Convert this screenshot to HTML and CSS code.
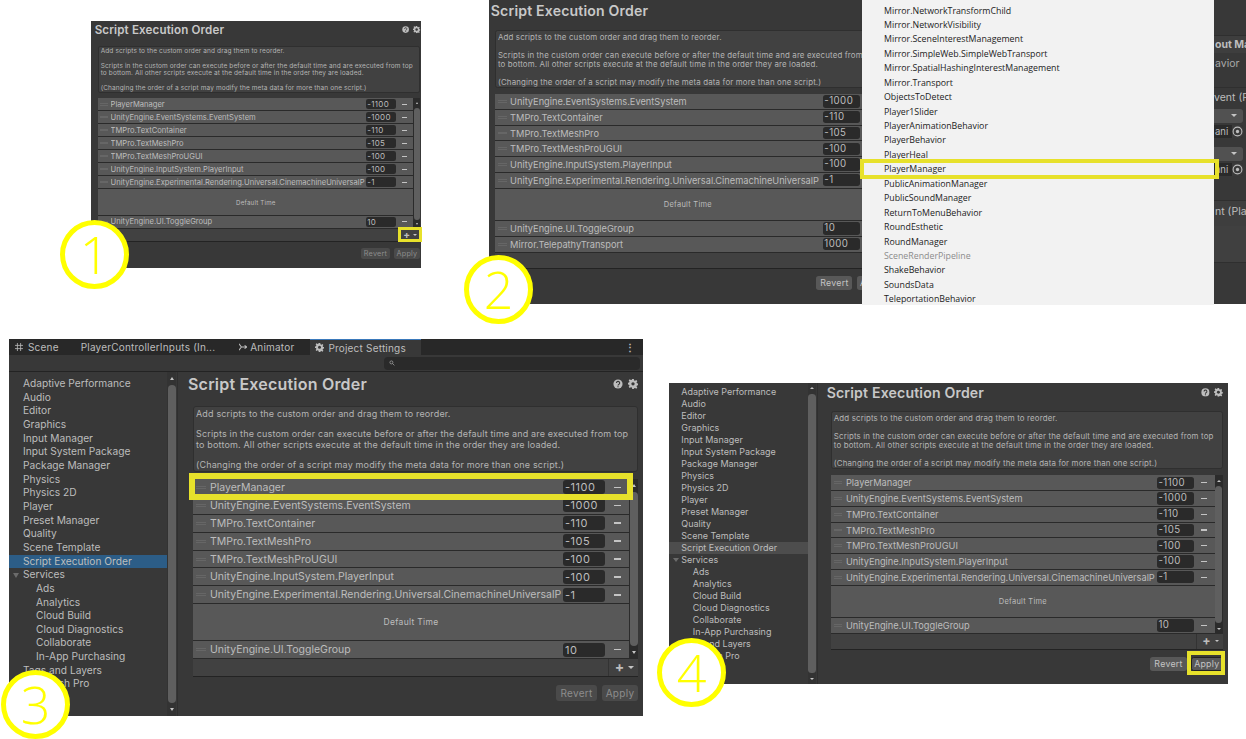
FILE: index.html
```html
<!DOCTYPE html>
<html lang="en">
<head>
  <meta charset="UTF-8" />
  <meta name="viewport" content="width=device-width, initial-scale=1.0" />
  <title>Script Execution Order</title>
  <link rel="stylesheet" href="styles.css">
</head>
<body>
  <svg class="sprite">
    <symbol id="gear" viewBox="0 0 12 12"><path d="M5 0h2l.3 1.700 1.200.5L10 1.200l1.200 1.400-1 1.400.5 1.200 1.800.3v1.900l-1.800.3-.5 1.200 1 1.400-1.200 1.400-1.500-1-1.200.5L7 12H5l-.3-1.700-1.200-.5-1.500 1L.8 9.400l1-1.400-.5-1.200-1.800-.3V4.600l1.800-.3.5-1.200-1-1.400L2 .3l1.500 1 1.200-.5z" fill="currentColor"/><circle cx="6" cy="5.800" r="2" fill="#383838"/></symbol>
    <symbol id="help" viewBox="0 0 12 12"><circle cx="6" cy="6" r="5.500" fill="currentColor"/><path d="M4.200 4.800a1.900 1.900 0 1 1 2.700 1.700c-.6.3-.9.6-.9 1.200M6 8.600v1.200" fill="none" stroke="#383838" stroke-width="1.400"/></symbol>
  </svg>

  <!-- step 1 -->
  <section class="shot shot-1">
    <div class="main">
      <div class="title-bar"><h2>Script Execution Order</h2><span class="title-icons"><svg><use href="#help"/></svg><svg><use href="#gear"/></svg></span></div>
      <div class="help-box">
        <p>Add scripts to the custom order and drag them to reorder.</p>
        <p>Scripts in the custom order can execute before or after the default time and are executed from top<br>to bottom. All other scripts execute at the default time in the order they are loaded.</p>
        <p>(Changing the order of a script may modify the meta data for more than one script.)</p>
      </div>
      <div class="list-wrap">
        <div class="rows">
          <div class="row"><i class="grip"></i><span class="name">PlayerManager</span><span class="num">-1100</span><b class="minus"></b></div>
          <div class="row"><i class="grip"></i><span class="name">UnityEngine.EventSystems.EventSystem</span><span class="num">-1000</span><b class="minus"></b></div>
          <div class="row"><i class="grip"></i><span class="name">TMPro.TextContainer</span><span class="num">-110</span><b class="minus"></b></div>
          <div class="row"><i class="grip"></i><span class="name">TMPro.TextMeshPro</span><span class="num">-105</span><b class="minus"></b></div>
          <div class="row"><i class="grip"></i><span class="name">TMPro.TextMeshProUGUI</span><span class="num">-100</span><b class="minus"></b></div>
          <div class="row"><i class="grip"></i><span class="name">UnityEngine.InputSystem.PlayerInput</span><span class="num">-100</span><b class="minus"></b></div>
          <div class="row"><i class="grip"></i><span class="name">UnityEngine.Experimental.Rendering.Universal.CinemachineUniversalP</span><span class="num">-1</span><b class="minus"></b></div>
          <div class="default-time">Default Time</div>
          <div class="row"><i class="grip"></i><span class="name">UnityEngine.UI.ToggleGroup</span><span class="num">10</span><b class="minus"></b></div>
        </div>
        <div class="scroll"><i class="up"></i><i class="thumb"></i><i class="down"></i></div>
      </div>
      <div class="list-foot"><span class="add">+<i class="caret"></i></span></div>
      <div class="buttons"><span class="btn">Revert</span><span class="btn">Apply</span></div>
    </div>
  </section>
  <div class="mark mark-add-1"></div>
  <div class="badge badge-1">1</div>

  <!-- step 2 -->
  <section class="shot shot-2">
    <div class="main">
      <div class="title-bar"><h2>Script Execution Order</h2></div>
      <div class="help-box">
        <p>Add scripts to the custom order and drag them to reorder.</p>
        <p>Scripts in the custom order can execute before or after the default time and are executed from top<br>to bottom. All other scripts execute at the default time in the order they are loaded.</p>
        <p>(Changing the order of a script may modify the meta data for more than one script.)</p>
      </div>
      <div class="list-wrap">
        <div class="rows">
          <div class="row"><i class="grip"></i><span class="name">UnityEngine.EventSystems.EventSystem</span><span class="num">-1000</span><b class="minus"></b></div>
          <div class="row"><i class="grip"></i><span class="name">TMPro.TextContainer</span><span class="num">-110</span><b class="minus"></b></div>
          <div class="row"><i class="grip"></i><span class="name">TMPro.TextMeshPro</span><span class="num">-105</span><b class="minus"></b></div>
          <div class="row"><i class="grip"></i><span class="name">TMPro.TextMeshProUGUI</span><span class="num">-100</span><b class="minus"></b></div>
          <div class="row"><i class="grip"></i><span class="name">UnityEngine.InputSystem.PlayerInput</span><span class="num">-100</span><b class="minus"></b></div>
          <div class="row"><i class="grip"></i><span class="name">UnityEngine.Experimental.Rendering.Universal.CinemachineUniversalP</span><span class="num">-1</span><b class="minus"></b></div>
          <div class="default-time">Default Time</div>
          <div class="row"><i class="grip"></i><span class="name">UnityEngine.UI.ToggleGroup</span><span class="num">10</span><b class="minus"></b></div>
          <div class="row"><i class="grip"></i><span class="name">Mirror.TelepathyTransport</span><span class="num">1000</span><b class="minus"></b></div>
        </div>
      </div>
      <div class="list-foot"></div>
      <div class="buttons"><span class="btn">Revert</span><span class="btn">Apply</span></div>
    </div>
  </section>
  <aside class="inspector">
    <div class="ins-head">out Ma</div>
    <div class="ins-text">avior</div>
    <div class="ins-event">vent (P</div>
    <div class="ins-drop"><i class="caret"></i></div>
    <div class="ins-field"><span>ani</span><svg viewBox="0 0 10 10"><circle cx="5" cy="5" r="4" fill="none" stroke="currentColor"/><circle cx="5" cy="5" r="1.500" fill="currentColor"/></svg></div>
    <div class="ins-drop ins-gap"><i class="caret"></i></div>
    <div class="ins-field"><span>ani</span><svg viewBox="0 0 10 10"><circle cx="5" cy="5" r="4" fill="none" stroke="currentColor"/><circle cx="5" cy="5" r="1.500" fill="currentColor"/></svg></div>
    <div class="ins-event ins-last">nt (Play</div>
    <div class="ins-empty"></div>
  </aside>
  <div class="script-menu">
    <ul>
      <li>Mirror.NetworkTransformChild</li>
      <li>Mirror.NetworkVisibility</li>
      <li>Mirror.SceneInterestManagement</li>
      <li>Mirror.SimpleWeb.SimpleWebTransport</li>
      <li>Mirror.SpatialHashingInterestManagement</li>
      <li>Mirror.Transport</li>
      <li>ObjectsToDetect</li>
      <li>Player1Slider</li>
      <li>PlayerAnimationBehavior</li>
      <li>PlayerBehavior</li>
      <li>PlayerHeal</li>
      <li>PlayerManager</li>
      <li>PublicAnimationManager</li>
      <li>PublicSoundManager</li>
      <li>ReturnToMenuBehavior</li>
      <li>RoundEsthetic</li>
      <li>RoundManager</li>
      <li class="off">SceneRenderPipeline</li>
      <li>ShakeBehavior</li>
      <li>SoundsData</li>
      <li>TeleportationBehavior</li>
    </ul>
  </div>
  <div class="mark mark-menu"></div>
  <div class="badge badge-2">2</div>

  <!-- step 3 -->
  <section class="shot shot-3">
    <div class="tabs">
      <span class="tab"><svg class="ico" viewBox="0 0 10 10"><path d="M3 0v10M7 0v10M0 3h10M0 7h10" stroke="currentColor" fill="none"/></svg>Scene</span>
      <span class="tab">PlayerControllerInputs (In...</span>
      <span class="tab tab-anim"><svg class="ico" viewBox="0 0 10 10"><path d="M0 1l3 4-3 4M3 5h7M7 3l3 2-3 2" stroke="currentColor" fill="none" stroke-width="1.300"/></svg>Animator</span>
      <span class="tab tab-on"><svg class="ico ico-gear"><use href="#gear"/></svg>Project Settings</span>
      <span class="tab-menu">&#8942;</span>
    </div>
    <div class="search-bar"><span class="search"><svg class="lens" viewBox="0 0 10 10"><circle cx="4" cy="4" r="2.500" stroke="currentColor" fill="none"/><path d="M6 6l3 3" stroke="currentColor"/></svg></span></div>
    <div class="body">
      <nav class="side">
        <div class="side-list">
          <a>Adaptive Performance</a><a>Audio</a><a>Editor</a><a>Graphics</a><a>Input Manager</a><a>Input System Package</a><a>Package Manager</a><a>Physics</a><a>Physics 2D</a><a>Player</a><a>Preset Manager</a><a>Quality</a><a>Scene Template</a><a class="on">Script Execution Order</a><a class="parent">Services</a><a class="sub">Ads</a><a class="sub">Analytics</a><a class="sub">Cloud Build</a><a class="sub">Cloud Diagnostics</a><a class="sub">Collaborate</a><a class="sub">In-App Purchasing</a><a>Tags and Layers</a><a>TextMesh Pro</a>
        </div>
        <div class="scroll"><i class="up"></i><i class="thumb"></i><i class="down"></i></div>
      </nav>
      <div class="main">
        <div class="title-bar"><h2>Script Execution Order</h2><span class="title-icons"><svg><use href="#help"/></svg><svg><use href="#gear"/></svg></span></div>
        <div class="help-box">
          <p>Add scripts to the custom order and drag them to reorder.</p>
          <p>Scripts in the custom order can execute before or after the default time and are executed from top<br>to bottom. All other scripts execute at the default time in the order they are loaded.</p>
          <p>(Changing the order of a script may modify the meta data for more than one script.)</p>
        </div>
        <div class="list-wrap">
          <div class="rows">
            <div class="row"><i class="grip"></i><span class="name">PlayerManager</span><span class="num">-1100</span><b class="minus"></b></div>
            <div class="row"><i class="grip"></i><span class="name">UnityEngine.EventSystems.EventSystem</span><span class="num">-1000</span><b class="minus"></b></div>
            <div class="row"><i class="grip"></i><span class="name">TMPro.TextContainer</span><span class="num">-110</span><b class="minus"></b></div>
            <div class="row"><i class="grip"></i><span class="name">TMPro.TextMeshPro</span><span class="num">-105</span><b class="minus"></b></div>
            <div class="row"><i class="grip"></i><span class="name">TMPro.TextMeshProUGUI</span><span class="num">-100</span><b class="minus"></b></div>
            <div class="row"><i class="grip"></i><span class="name">UnityEngine.InputSystem.PlayerInput</span><span class="num">-100</span><b class="minus"></b></div>
            <div class="row"><i class="grip"></i><span class="name">UnityEngine.Experimental.Rendering.Universal.CinemachineUniversalP</span><span class="num">-1</span><b class="minus"></b></div>
            <div class="default-time">Default Time</div>
            <div class="row"><i class="grip"></i><span class="name">UnityEngine.UI.ToggleGroup</span><span class="num">10</span><b class="minus"></b></div>
          </div>
          <div class="scroll"><i class="up"></i><i class="thumb"></i><i class="down"></i></div>
        </div>
        <div class="list-foot"><span class="add">+<i class="caret"></i></span></div>
        <div class="buttons"><span class="btn">Revert</span><span class="btn">Apply</span></div>
      </div>
    </div>
  </section>
  <div class="mark mark-row"></div>
  <div class="badge badge-3">3</div>

  <!-- step 4 -->
  <section class="shot shot-4">
    <div class="body">
      <nav class="side">
        <div class="side-list">
          <a>Adaptive Performance</a><a>Audio</a><a>Editor</a><a>Graphics</a><a>Input Manager</a><a>Input System Package</a><a>Package Manager</a><a>Physics</a><a>Physics 2D</a><a>Player</a><a>Preset Manager</a><a>Quality</a><a>Scene Template</a><a class="on">Script Execution Order</a><a class="parent">Services</a><a class="sub">Ads</a><a class="sub">Analytics</a><a class="sub">Cloud Build</a><a class="sub">Cloud Diagnostics</a><a class="sub">Collaborate</a><a class="sub">In-App Purchasing</a><a>Tags and Layers</a><a>TextMesh Pro</a>
        </div>
        <div class="scroll"><i class="up"></i><i class="thumb"></i><i class="down"></i></div>
      </nav>
      <div class="main">
        <div class="title-bar"><h2>Script Execution Order</h2><span class="title-icons"><svg><use href="#help"/></svg><svg><use href="#gear"/></svg></span></div>
        <div class="help-box">
          <p>Add scripts to the custom order and drag them to reorder.</p>
          <p>Scripts in the custom order can execute before or after the default time and are executed from top<br>to bottom. All other scripts execute at the default time in the order they are loaded.</p>
          <p>(Changing the order of a script may modify the meta data for more than one script.)</p>
        </div>
        <div class="list-wrap">
          <div class="rows">
            <div class="row"><i class="grip"></i><span class="name">PlayerManager</span><span class="num">-1100</span><b class="minus"></b></div>
            <div class="row"><i class="grip"></i><span class="name">UnityEngine.EventSystems.EventSystem</span><span class="num">-1000</span><b class="minus"></b></div>
            <div class="row"><i class="grip"></i><span class="name">TMPro.TextContainer</span><span class="num">-110</span><b class="minus"></b></div>
            <div class="row"><i class="grip"></i><span class="name">TMPro.TextMeshPro</span><span class="num">-105</span><b class="minus"></b></div>
            <div class="row"><i class="grip"></i><span class="name">TMPro.TextMeshProUGUI</span><span class="num">-100</span><b class="minus"></b></div>
            <div class="row"><i class="grip"></i><span class="name">UnityEngine.InputSystem.PlayerInput</span><span class="num">-100</span><b class="minus"></b></div>
            <div class="row"><i class="grip"></i><span class="name">UnityEngine.Experimental.Rendering.Universal.CinemachineUniversalP</span><span class="num">-1</span><b class="minus"></b></div>
            <div class="default-time">Default Time</div>
            <div class="row"><i class="grip"></i><span class="name">UnityEngine.UI.ToggleGroup</span><span class="num">10</span><b class="minus"></b></div>
          </div>
          <div class="scroll"><i class="up"></i><i class="thumb"></i><i class="down"></i></div>
        </div>
        <div class="list-foot"><span class="add">+<i class="caret"></i></span></div>
        <div class="buttons"><span class="btn">Revert</span><span class="btn btn-on">Apply</span></div>
      </div>
    </div>
  </section>
  <div class="mark mark-apply"></div>
  <div class="badge badge-4">4</div>
</body>
</html>
```
FILE: styles.css
```css
body {
  margin: 0;
  background: #fff;
  font-family: Inter, "Liberation Sans", sans-serif;
  color: #bdbdbd;
  width: 1246px;
  height: 739px;
  overflow: hidden;
  position: relative;
}
p, h2, ul {
  margin: 0;
  padding: 0;
}
.sprite {
  position: absolute;
  width: 0;
  height: 0;
}

/* the four screenshots sit on a free canvas */
.shot {
  position: absolute;
  background: #383838;
  overflow: hidden;
}
.shot-1 { left: 91px; top: 21px; width: 330px; height: 247px; }
.shot-2 { left: 489px; top: 0; width: 373px; height: 304px; }
.shot-3 { left: 9px; top: 339px; width: 634px; height: 377px; }
.shot-4 { left: 669px; top: 383px; width: 559px; height: 301px; }

.shot-1 .main { zoom: .724; padding-right: 1.6px; }
.shot-2 .main { zoom: .88; width: 459px; padding-left: 7px; }
.shot-2 .rows { padding-right: 9px; }
.shot-4 .body { zoom: .88; height: 342px; }
.shot-4 .title-bar { height: 32px; }
.shot-4 .side-list { padding-top: 3px; }

/* tabs + search */
.tabs {
  display: flex;
  align-items: center;
  height: 16px;
  background: #282828;
  font-size: 10px;
  letter-spacing: .2px;
}
.tab {
  display: flex;
  align-items: center;
  gap: 5px;
  height: 100%;
  padding: 0 11px;
}
.tab:first-child { padding-left: 6px; }
.tab-anim { padding: 0 16px 0 13px; gap: 3px; }
.tab-on {
  background: #383838;
  border-top: 1px solid #3a79bb;
  box-sizing: border-box;
  padding: 0 15px 0 5px;
  gap: 4px;
}
.tab-menu {
  margin-left: auto;
  margin-right: 8px;
  font-weight: 700;
}
.ico {
  width: 8px;
  height: 8px;
}
.ico-gear {
  width: 9px;
  height: 9px;
  overflow: visible;
}
.search-bar {
  height: 17px;
  background: #383838;
  border-bottom: 1px solid #232323;
  box-sizing: border-box;
  display: flex;
  justify-content: flex-end;
  align-items: center;
  padding-right: 3px;
}
.search {
  width: 256px;
  height: 13px;
  border-radius: 4px;
  background: #2a2a2a;
  display: flex;
  align-items: center;
  padding-left: 5px;
  box-sizing: border-box;
}
.lens {
  width: 6px;
  height: 6px;
}

/* settings sidebar */
.body {
  display: flex;
  height: 344px;
}
.side {
  width: 168px;
  flex: none;
  display: flex;
  border-right: 1px solid #2f2f2f;
}
.side-list {
  flex: 1;
  padding-top: 5px;
}
.side-list a {
  display: block;
  height: 13.67px;
  line-height: 13.67px;
  font-size: 10.2px;
  padding-left: 14px;
}
.side-list a.sub { padding-left: 27px; }
.side-list a.on { background: #2c5d87; }
.shot-4 .side-list a.on { background: #4d4d4d; }
.side-list a.parent { position: relative; }
.side-list a.parent::before {
  content: "";
  position: absolute;
  left: 4px;
  top: 5px;
  border-left: 3.5px solid transparent;
  border-right: 3.5px solid transparent;
  border-top: 5px solid #6b6b6b;
}

.scroll {
  width: 9px;
  flex: none;
  background: #2b2b2b;
  display: flex;
  flex-direction: column;
  align-items: center;
}
.scroll .thumb {
  flex: 1;
  width: 8px;
  background: #5f5f5f;
  border-radius: 4px;
}
.scroll .up, .scroll .down {
  flex: none;
  width: 0;
  margin: 5px 0;
  border-left: 2.5px solid transparent;
  border-right: 2.5px solid transparent;
}
.scroll .up { border-bottom: 3px solid #c4c4c4; }
.scroll .down { border-top: 3px solid #c4c4c4; }
.side .scroll { margin-right: 1px; background: #333; }

/* main column */
.main {
  flex: none;
  width: 456px;
  padding: 0 5px 0 10px;
  box-sizing: border-box;
}
.body .main {
  width: 465px;
  padding-left: 15px;
}
.title-bar {
  height: 34px;
  display: flex;
  align-items: center;
  justify-content: space-between;
  margin-left: -5px;
  padding-bottom: 10px;
  box-sizing: border-box;
}
h2 {
  font-size: 16px;
  font-weight: 600;
  letter-spacing: .2px;
  color: #c8c8c8;
  white-space: nowrap;
}
.title-icons {
  display: flex;
  gap: 5px;
}
.title-icons svg {
  width: 10px;
  height: 10px;
  overflow: visible;
}
.help-box {
  height: 66px;
  box-sizing: border-box;
  background: #414141;
  border: 1px solid #2f2f2f;
  border-radius: 3px;
  padding: 2px;
  font-size: 9px;
  line-height: 10.5px;
  letter-spacing: .16px;
  white-space: nowrap;
  color: #b4b4b4;
}
.help-box p + p { margin-top: 9.8px; }
.list-wrap {
  margin-top: 7px;
  display: flex;
}
.rows {
  flex: 1;
  min-width: 0;
}
.row {
  height: 17.9px;
  box-sizing: border-box;
  background: #585858;
  border-bottom: 1px solid #2a2a2a;
  display: flex;
  align-items: center;
  font-size: 10.5px;
}
.grip {
  flex: none;
  width: 10px;
  height: 3px;
  margin: 0 4px 0 3px;
  border-top: 1px solid #666;
  border-bottom: 1px solid #666;
  box-sizing: border-box;
}
.name {
  flex: 1;
  white-space: nowrap;
  overflow: hidden;
}
.num {
  width: 42px;
  height: 14px;
  flex: none;
  line-height: 14px;
  background: #2a2a2a;
  border-radius: 3px;
  padding-left: 2px;
  box-sizing: border-box;
  font-size: 11px;
  letter-spacing: .5px;
}
.minus {
  width: 24px;
  flex: none;
  display: flex;
  justify-content: center;
}
.minus::before {
  content: "";
  width: 7px;
  height: 1.5px;
  background: #c4c4c4;
}
.default-time {
  height: 37px;
  background: #585858;
  border-bottom: 1px solid #2a2a2a;
  box-sizing: border-box;
  display: flex;
  align-items: center;
  justify-content: center;
  font-size: 8.5px;
  letter-spacing: .3px;
}
.list-foot {
  height: 18px;
  background: #414141;
  border-bottom: 1px solid #232323;
  box-sizing: border-box;
  display: flex;
  justify-content: flex-end;
}
.add {
  width: 30px;
  border-left: 1px solid #333;
  font-size: 14px;
  line-height: 16px;
  font-weight: 700;
  text-align: center;
  position: relative;
  box-sizing: border-box;
  padding-right: 8px;
}
.caret {
  position: absolute;
  right: 4px;
  top: 7px;
  border-left: 3px solid transparent;
  border-right: 3px solid transparent;
  border-top: 3px solid #c4c4c4;
}
.buttons {
  margin-top: 8px;
  display: flex;
  justify-content: flex-end;
  gap: 5px;
}
.btn {
  height: 16px;
  line-height: 16px;
  width: 41px;
  text-align: center;
  background: #4a4a4a;
  color: #8d8d8d;
  border-radius: 3px;
  font-size: 10px;
  letter-spacing: .3px;
}
.btn:last-child { width: 36px; }
.shot-2 .btn, .shot-4 .btn {
  background: #585858;
  color: #c4c4c4;
}
.shot-4 .btn-on {
  border: 1px solid #222;
  box-sizing: border-box;
  line-height: 14px;
}

/* inspector that peeks out behind the picker in step 2 */
.inspector {
  position: absolute;
  left: 1214px;
  top: 0;
  width: 32px;
  height: 304px;
  background: #383838;
  overflow: hidden;
  font-size: 10.5px;
  line-height: 14px;
  white-space: nowrap;
  display: flex;
  flex-direction: column;
}
.ins-head {
  margin-top: 35px;
  height: 17px;
  line-height: 17px;
  background: #3e3e3e;
  border-top: 1px solid #2f2f2f;
  font-weight: 700;
  padding-left: 1px;
}
.ins-text {
  margin-top: 3px;
  height: 30px;
  padding-left: 1px;
  color: #a8a8a8;
  border-bottom: 1px solid #2f2f2f;
  padding-top: 1px;
}
.ins-event {
  margin-top: 2px;
  height: 18px;
  padding-top: 1px;
}
.ins-drop {
  flex: none;
  height: 14px;
  margin-right: 3px;
  background: #515151;
  border-radius: 0 3px 3px 0;
  position: relative;
}
.ins-drop .caret { right: 6px; top: 5px; }
.ins-gap { margin-top: 9px; }
.ins-field {
  flex: none;
  height: 13px;
  line-height: 13px;
  margin: 2px 3px 0 0;
  padding-left: 1px;
  background: #2a2a2a;
  border-radius: 0 3px 3px 0;
  display: flex;
  justify-content: space-between;
  align-items: center;
  font-size: 9.5px;
  overflow: hidden;
}
.ins-field svg {
  flex: none;
  width: 11px;
  height: 13px;
  padding: 1px 0;
  box-sizing: border-box;
  background: #3a3a3a;
}
.ins-last {
  margin-top: 24px;
  padding: 4px 0 0 1px;
  height: 21px;
  background: #3e3e3e;
  border-top: 1px solid #2f2f2f;
}
.ins-empty {
  height: 36px;
  background: #404040;
  border-bottom: 1px solid #2f2f2f;
}

/* script picker that pops over step 2 */
.script-menu {
  position: absolute;
  left: 862px;
  top: 0;
  width: 352px;
  height: 305px;
  background: #f2f2f2;
  overflow: hidden;
  font-family: "Open Sans", sans-serif;
  color: #222;
  font-size: 8.8px;
}
.script-menu ul { padding-top: 3.5px; }
.script-menu li {
  list-style: none;
  height: 14.45px;
  line-height: 14.45px;
  padding-left: 22px;
  white-space: nowrap;
}
.script-menu .off { color: #8c8c8c; }

/* yellow callouts */
.mark {
  position: absolute;
  border: 4px solid #e7e12b;
  box-sizing: border-box;
}
.mark-add-1 { left: 398px; top: 227px; width: 24px; height: 15px; border-width: 3px; }
.mark-menu { left: 860px; top: 159px; width: 359px; height: 20px; }
.mark-row { left: 189px; top: 473px; width: 444px; height: 27px; border-width: 6px; }
.mark-apply { left: 1187px; top: 651px; width: 38px; height: 24px; }

.badge {
  position: absolute;
  width: 69px;
  height: 69px;
  box-sizing: border-box;
  border: 5px solid #ff0;
  border-radius: 50%;
  background: #fff;
  color: #ff0;
  font-family: "Open Sans", sans-serif;
  font-weight: 300;
  font-size: 52px;
  line-height: 58px;
  text-align: center;
}
.badge-1 { left: 60px; top: 220px; }
.badge-2 { left: 464px; top: 255px; }
.badge-3 { left: 1px; top: 670px; }
.badge-4 { left: 657px; top: 638px; }
```
